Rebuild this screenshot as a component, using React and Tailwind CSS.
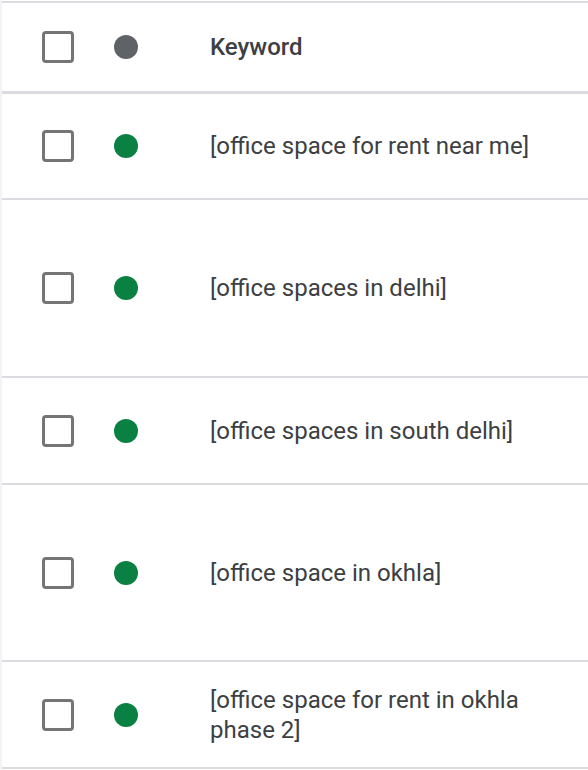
import React from "react";

const rows = [
  { text: "[office space for rent near me]", h: "h-[106px]" },
  { text: "[office spaces in delhi]", h: "h-[178px]" },
  { text: "[office spaces in south delhi]", h: "h-[107px]" },
  { text: "[office space in okhla]", h: "h-[177px]" },
  { text: "[office space for rent in okhla phase 2]", h: "h-[107px]" },
];

const Checkbox = () => (
  <div className="w-[32px] h-[32px] shrink-0 rounded-[4px] border-[3px] border-[#757575] bg-white" />
);

const App = () => {
  return (
    <div
      className="w-[588px] h-[770px] bg-white border-l-2 border-[#f1f3f4] pt-px"
      style={{ fontFamily: "Roboto, 'Liberation Sans', sans-serif" }}
    >
      <div className="border-t-2 border-[#dadce0]">
        {/* header */}
        <div className="flex items-center h-[91px] pl-[40px] border-b-[3px] border-[#dadce0]">
          <Checkbox />
          <div className="ml-[40px] w-6 h-6 rounded-full bg-[#5f6368] shrink-0" />
          <p className="ml-[72px] text-[24px] font-medium text-[#3c4043]">Keyword</p>
        </div>

        {rows.map((row, i) => (
          <div
            key={i}
            className={`flex items-center ${row.h} pl-[40px] border-b-2 border-[#dadce0]`}
          >
            <Checkbox />
            <div className="ml-[40px] w-6 h-6 rounded-full bg-[#0b8043] shrink-0" />
            <p className="ml-[72px] w-[330px] text-[24px] leading-[30px] text-[#3c4043]">
              {row.text}
            </p>
          </div>
        ))}
      </div>
    </div>
  );
};

export default App;
